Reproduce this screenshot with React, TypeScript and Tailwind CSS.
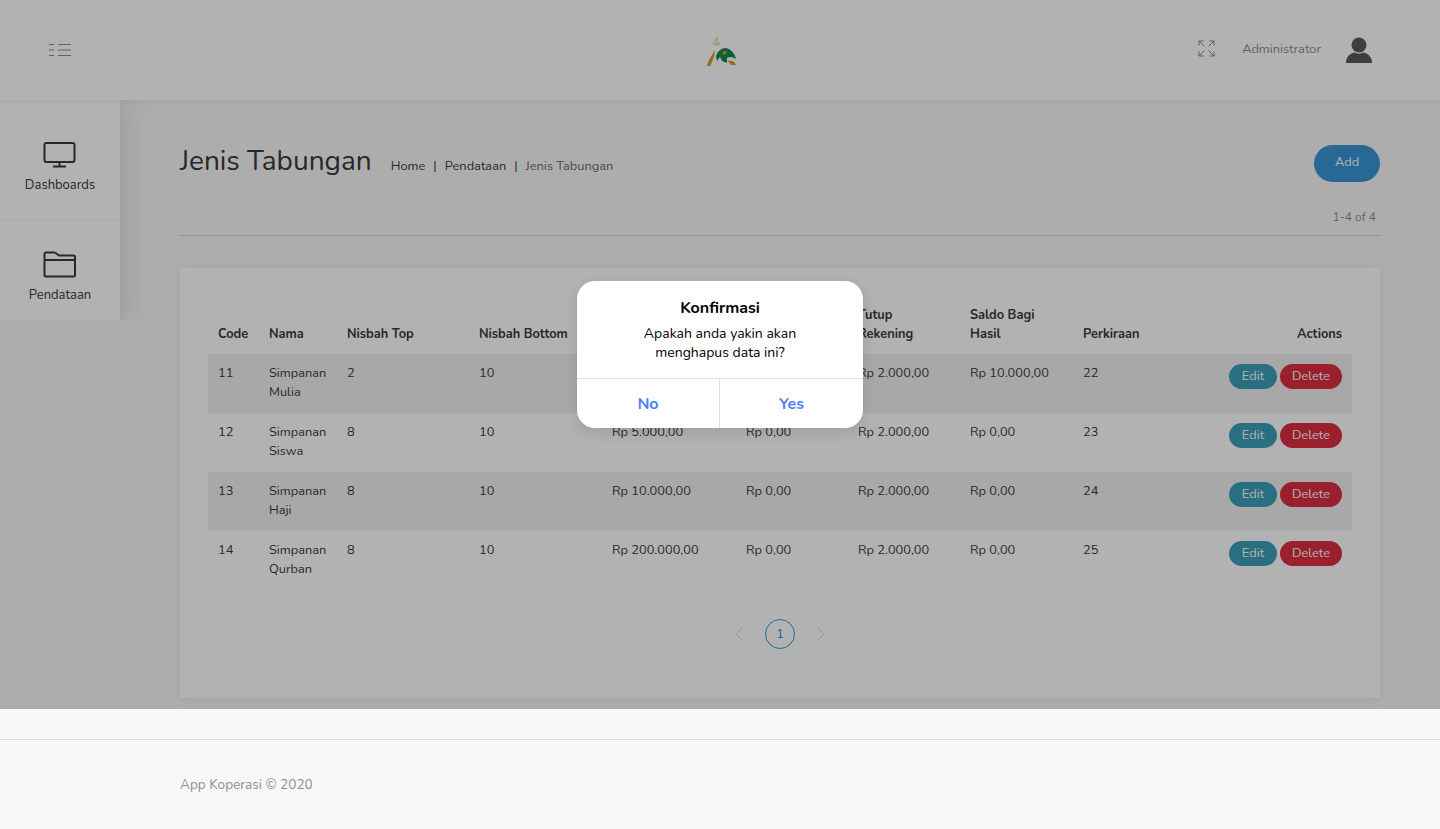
import React from 'react';
import { ChevronLeft, ChevronRight } from 'lucide-react';

const rows = [
  { code: '11', nama: 'Simpanan Mulia', top: '2', bottom: '10', setor: 'Rp 5.000,00', saldo: 'Rp 0,00', tutup: 'Rp 2.000,00', bagi: 'Rp 10.000,00', kira: '22' },
  { code: '12', nama: 'Simpanan Siswa', top: '8', bottom: '10', setor: 'Rp 5.000,00', saldo: 'Rp 0,00', tutup: 'Rp 2.000,00', bagi: 'Rp 0,00', kira: '23' },
  { code: '13', nama: 'Simpanan Haji', top: '8', bottom: '10', setor: 'Rp 10.000,00', saldo: 'Rp 0,00', tutup: 'Rp 2.000,00', bagi: 'Rp 0,00', kira: '24' },
  { code: '14', nama: 'Simpanan Qurban', top: '8', bottom: '10', setor: 'Rp 200.000,00', saldo: 'Rp 0,00', tutup: 'Rp 2.000,00', bagi: 'Rp 0,00', kira: '25' },
];

const Logo = () => (
  <svg width="32" height="34" viewBox="0 0 32 34" fill="none">
    <path d="M10.5 2 L13 7 L8 7 Z" fill="#eadfc6" />
    <path d="M7 8 H14 L14 11 C12 12 9 12 7 11 Z" fill="#eadfc6" />
    <path d="M9 16 C6 21 2 27 1 32 L4 32 C6 28 9 22 9 16 Z" fill="#d9972c" />
    <path d="M10 22 C12 17 15 14 20 14 C25 15 29 20 30 25 C27 23 24 22 21 24 L21 29 L16 27 L14 23 L11 27 Z" fill="#0c8a4e" />
    <path d="M22 27 C25 26 29 27 30 31 L25 31 Z" fill="#d9972c" />
    <path d="M16 18 L21 17 L20 20 L17 21 Z" fill="#d9972c" />
  </svg>
);

const MenuIcon = () => (
  <svg width="24" height="14" viewBox="0 0 24 14" fill="none" stroke="#8f8f8f" strokeWidth="1">
    <path d="M1 1.5H6M1 7H6M1 12.5H6M10 1.5H23M10 7H23M10 12.5H23" />
  </svg>
);

const ExpandIcon = () => (
  <svg width="17" height="17" viewBox="0 0 17 17" fill="none" stroke="#8a8a8a" strokeWidth="1">
    <path d="M1 5.5V1H5.5M1 1L6.5 6.5" />
    <path d="M11.5 1H16V5.5M16 1L10.5 6.5" />
    <path d="M1 11.5V16H5.5M1 16L6.5 10.5" />
    <path d="M11.5 16H16V11.5M16 16L10.5 10.5" />
  </svg>
);

const PersonIcon = () => (
  <svg width="26" height="27" viewBox="0 0 26 27" fill="#5a5a5a">
    <circle cx="13" cy="8" r="7.5" />
    <path d="M0 26 C0 19 5 16 9 15.5 C11 17 15 17 17 15.5 C21 16 26 19 26 26 Z" />
  </svg>
);

const DesktopIcon = () => (
  <svg width="34" height="28" viewBox="0 0 34 28" fill="none" stroke="#3a3a3a" strokeWidth="2" strokeLinejoin="round">
    <rect x="1.5" y="2" width="30" height="19" rx="2" />
    <path d="M16.5 21V25M10 25.5H23" />
  </svg>
);

const FolderIcon = () => (
  <svg width="34" height="27" viewBox="0 0 34 27" fill="none" stroke="#3a3a3a" strokeWidth="2" strokeLinejoin="round">
    <path d="M1.5 24V3C1.5 2 2 1.5 3 1.5H11C12 1.5 13 2 14 3L16 4.5H30.5C31.5 4.5 32 5 32 6V24C32 25 31.5 25.5 30.5 25.5H3C2 25.5 1.5 25 1.5 24Z" />
    <path d="M1.5 9H32" />
  </svg>
);

const App = () => {
  return (
    <div className="relative min-h-[829px] bg-[#f8f8f8] font-['Nunito','Lato',sans-serif] text-[#3a3a3a]">
      <header className="relative z-10 grid h-[100px] grid-cols-[1fr_auto_1fr] items-center bg-white pl-[48px] pr-[68px] shadow-[0_1px_15px_rgba(0,0,0,0.04),0_1px_6px_rgba(0,0,0,0.04)]">
        <div>
          <MenuIcon />
        </div>
        <div className="pl-[24px] pt-[1px]">
          <Logo />
        </div>
        <div className="flex items-center justify-end">
          <div className="mb-[3px] flex">
            <ExpandIcon />
          </div>
          <span className="ml-[27px] mr-[25px] text-[12.8px] text-[#8f8f8f]">Administrator</span>
          <PersonIcon />
        </div>
      </header>

      <div className="flex h-[609px] items-start">
        {/* shadow only shows to the right of the menu, so it is clipped at the bottom */}
        <div className="h-[220px] w-[150px] shrink-0 overflow-hidden">
          <nav className="flex h-[220px] w-[120px] flex-col bg-white shadow-[0_3px_30px_rgba(0,0,0,0.15)]">
            <div className="flex h-[120px] flex-col items-center gap-[7px] border-b border-[#f3f3f3] pt-[41px]">
              <DesktopIcon />
              <span className="text-[13px] leading-[18px]">Dashboards</span>
            </div>
            <div className="flex h-[100px] flex-col items-center gap-[8px] pt-[31px]">
              <FolderIcon />
              <span className="text-[13px] leading-[18px]">Pendataan</span>
            </div>
          </nav>
        </div>

        <main className="ml-[30px] w-[1200px] pt-[45px]">
          <div className="flex h-[36px] items-center">
            <h1 className="mb-[4px] text-[28px] leading-none text-[#3a3a3a]">Jenis Tabungan</h1>
            <div className="ml-[19px] mt-[8px] flex gap-[8px] text-[12.8px]">
              <span>Home</span>
              <span>|</span>
              <span>Pendataan</span>
              <span>|</span>
              <span className="text-[#6c6c6c]">Jenis Tabungan</span>
            </div>
            <button className="ml-auto h-[37px] w-[66px] rounded-full bg-[#3a96d4] text-[12.8px] text-white">Add</button>
          </div>
          <div className="mt-[27px] border-b border-[#d7d7d7] pb-[9px] pr-[4px] text-right text-[12px] leading-[18px] text-[#8f8f8f]">1-4 of 4</div>

          <section className="mt-[32px] h-[430px] bg-white px-[28px] pt-[35px] shadow-[0_1px_15px_rgba(0,0,0,0.04),0_1px_6px_rgba(0,0,0,0.04)]">
            <table className="w-full table-fixed border-collapse text-left text-[12.8px] leading-[19px]">
              <thead>
                <tr className="h-[51px] align-bottom font-bold">
                  <th className="w-[51px] pb-[10px] pl-[10px]">Code</th>
                  <th className="w-[78px] pb-[10px] pl-[10px]">Nama</th>
                  <th className="w-[132px] pb-[10px] pl-[10px]">Nisbah Top</th>
                  <th className="w-[133px] pb-[10px] pl-[10px]">Nisbah Bottom</th>
                  <th className="w-[134px] pb-[10px] pl-[10px]">Setoran Awal</th>
                  <th className="w-[112px] pb-[10px] pl-[10px]">Saldo Min</th>
                  <th className="w-[112px] pb-[10px] pl-[10px] pr-[20px]">Tutup Rekening</th>
                  <th className="w-[113px] pb-[10px] pl-[10px] pr-[20px]">Saldo Bagi Hasil</th>
                  <th className="w-[90px] pb-[10px] pl-[10px]">Perkiraan</th>
                  <th className="pb-[10px] pr-[10px] text-right">Actions</th>
                </tr>
              </thead>
              <tbody>
                {rows.map((r, i) => (
                  <tr key={r.code} className={`h-[59px] align-top ${i % 2 === 0 ? 'bg-[#f1f1f1]' : ''}`}>
                    <td className="pl-[10px] pt-[10px]">{r.code}</td>
                    <td className="pl-[10px] pt-[10px]">{r.nama}</td>
                    <td className="pl-[10px] pt-[10px]">{r.top}</td>
                    <td className="pl-[10px] pt-[10px]">{r.bottom}</td>
                    <td className="pl-[10px] pt-[10px]">{r.setor}</td>
                    <td className="pl-[10px] pt-[10px]">{r.saldo}</td>
                    <td className="pl-[10px] pt-[10px]">{r.tutup}</td>
                    <td className="pl-[10px] pt-[10px]">{r.bagi}</td>
                    <td className="pl-[10px] pt-[10px]">{r.kira}</td>
                    <td className="pr-[10px] pt-[10px]">
                      <div className="flex justify-end gap-[3px]">
                        <button className="h-[25px] w-[48px] rounded-full bg-[#3b9fb9] text-[12.8px] text-white">Edit</button>
                        <button className="h-[25px] w-[62px] rounded-full bg-[#dc2f40] text-[12.8px] text-white">Delete</button>
                      </div>
                    </td>
                  </tr>
                ))}
              </tbody>
            </table>

            <div className="mt-[29px] flex items-center justify-center gap-[10px] text-[#d7d7d7]">
              <ChevronLeft size={24} strokeWidth={1} />
              <span className="mx-[4px] flex h-[30px] w-[30px] items-center justify-center rounded-full border border-[#3a96d4] text-[12px] text-[#2a80c8]">1</span>
              <ChevronRight size={24} strokeWidth={1} />
            </div>
          </section>
        </main>
      </div>

      <footer className="mt-[30px] flex h-[90px] items-center border-t border-[#d7d7d7] pl-[180px] pt-[2px] text-[13.6px] text-[#8f8f8f]">
        App Koperasi © 2020
      </footer>

      <div className="absolute inset-x-0 top-0 z-20 h-[709px] bg-black/30" />

      <div className="absolute left-[577px] top-[281px] z-30 w-[286px] overflow-hidden rounded-[18px] bg-white text-center text-black shadow-[0_4px_14px_rgba(0,0,0,0.12)]">
        <div className="h-[97px] px-[20px] pt-[17px]">
          <div className="text-[16px] font-bold leading-[20px]">Konfirmasi</div>
          <div className="mt-[6px] text-[14px] leading-[19px]">
            Apakah anda yakin akan
            <br />
            menghapus data ini?
          </div>
        </div>
        <div className="flex h-[50px] border-t border-[#dfdfdf] text-[16px] font-bold text-[#4b7fff]">
          <button className="w-[143px] border-r border-[#dfdfdf]">No</button>
          <button className="flex-1">Yes</button>
        </div>
      </div>
    </div>
  );
};

export default App;
